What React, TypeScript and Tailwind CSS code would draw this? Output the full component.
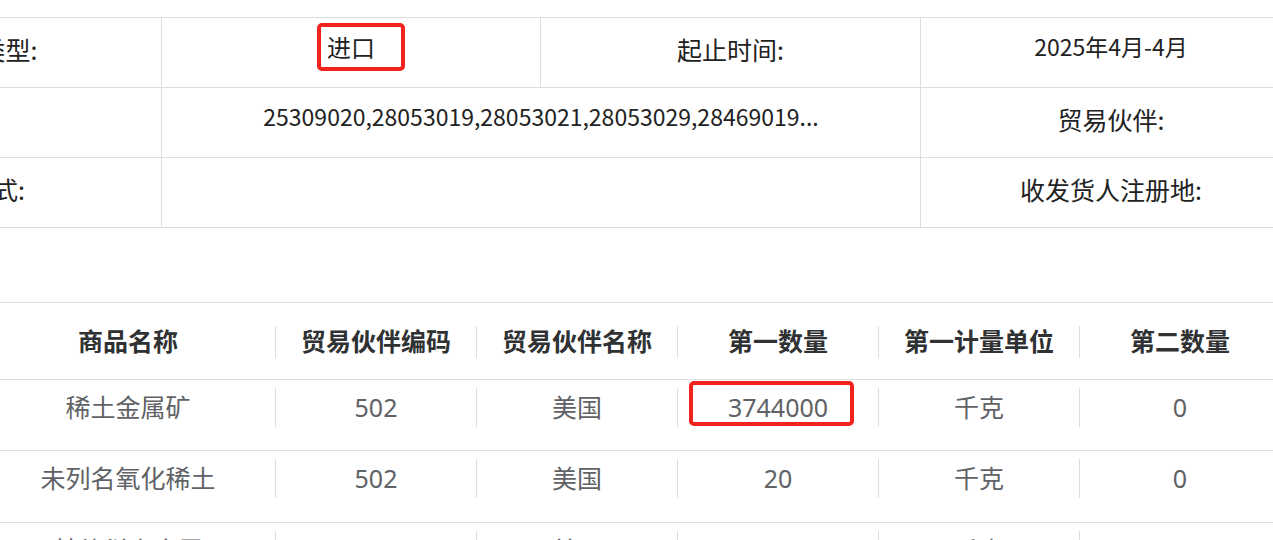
import React from "react";

const topFont = "font-['Noto_Sans_CJK_SC','Noto_Sans',sans-serif]";
const botFont = "font-['Noto_Sans','Noto_Sans_CJK_SC',sans-serif]";

type Row = { name: string; code: string; partner: string; q1: string; unit: string; q2: string; mark?: boolean };

const rows: Row[] = [
  { name: "稀土金属矿", code: "502", partner: "美国", q1: "3744000", unit: "千克", q2: "0", mark: true },
  { name: "未列名氧化稀土", code: "502", partner: "美国", q1: "20", unit: "千克", q2: "0" },
  { name: "其他稀土金属", code: "502", partner: "美国", q1: "1500", unit: "千克", q2: "0" },
];

const headers = ["商品名称", "贸易伙伴编码", "贸易伙伴名称", "第一数量", "第一计量单位", "第二数量"];

function colWidth(i: number) {
  return i === 0 ? "w-[295px]" : "w-[201px]";
}

export default function App() {
  return (
    <div className={`w-[1273px] h-[540px] overflow-hidden bg-white ${topFont}`}>
      {/* Top info table */}
      <div className="pt-[17px]">
        <div className="-ml-[218px] w-[1600px] border-t border-[#dddddd] text-[25px] text-[#222222]">
          <div className="flex h-[70px] border-b border-[#dddddd]">
            <div className="w-[380px] shrink-0 border-r border-[#dddddd] flex items-center justify-center pb-[6px]">进出口类型:</div>
            <div className="relative w-[379px] shrink-0 border-r border-[#dddddd] flex items-center justify-center pb-[12px] text-[24px]">
              进口
              <div className="absolute left-[155px] top-[5px] w-[88px] h-[48px] border-[4px] border-[#f2231c] rounded-[5px]" />
            </div>
            <div className="w-[380px] shrink-0 border-r border-[#dddddd] flex items-center justify-center pb-[6px]">起止时间:</div>
            <div className="w-[380px] shrink-0 flex items-center justify-center pb-[12px] text-[23px]">2025年4月-4月</div>
          </div>
          <div className="flex h-[70px] border-b border-[#dddddd]">
            <div className="w-[380px] shrink-0 border-r border-[#dddddd] flex items-center justify-center pb-[6px]">编码:</div>
            <div className="w-[759px] shrink-0 border-r border-[#dddddd] flex items-center justify-center pb-[12px] text-[23px]">
              25309020,28053019,28053021,28053029,28469019...
            </div>
            <div className="w-[380px] shrink-0 flex items-center justify-center pb-[6px]">贸易伙伴:</div>
          </div>
          <div className="flex h-[70px] border-b border-[#dddddd]">
            <div className="w-[380px] shrink-0 border-r border-[#dddddd] flex items-center justify-center pb-[6px]">贸易方式:</div>
            <div className="w-[759px] shrink-0 border-r border-[#dddddd]" />
            <div className="w-[380px] shrink-0 flex items-center justify-center pb-[6px]">收发货人注册地:</div>
          </div>
        </div>
      </div>

      {/* Result table */}
      <div className={`mt-[74px] border-t border-[#dddddd] text-[25px] ${botFont}`}>
        <div className="-ml-[19px] w-[1600px]">
          <div className="flex h-[77px] border-b border-[#dddddd] items-start pt-[23px]">
            {headers.map((h, i) => (
              <div key={h} className={`${colWidth(i)} shrink-0 h-[32px] border-r border-[#dddddd] flex items-center justify-center font-bold text-[#303133]`}>
                {h}
              </div>
            ))}
          </div>
          {rows.map((r, ri) => (
            <div key={ri} className={`flex ${ri === 0 ? "h-[71px]" : "h-[72px]"} border-b border-[#dddddd] items-start pt-[8px] text-[#606266]`}>
              {[r.name, r.code, r.partner, r.q1, r.unit, r.q2].map((v, i) => (
                <div key={i} className={`relative ${colWidth(i)} shrink-0 h-[39px] border-r border-[#dddddd] flex items-center justify-center`}>
                  {v}
                  {r.mark && i === 3 ? (
                    <div className="absolute left-[11px] -top-[7px] w-[165px] h-[45px] border-[4px] border-[#f2231c] rounded-[5px]" />
                  ) : null}
                </div>
              ))}
            </div>
          ))}
        </div>
      </div>
    </div>
  );
}
